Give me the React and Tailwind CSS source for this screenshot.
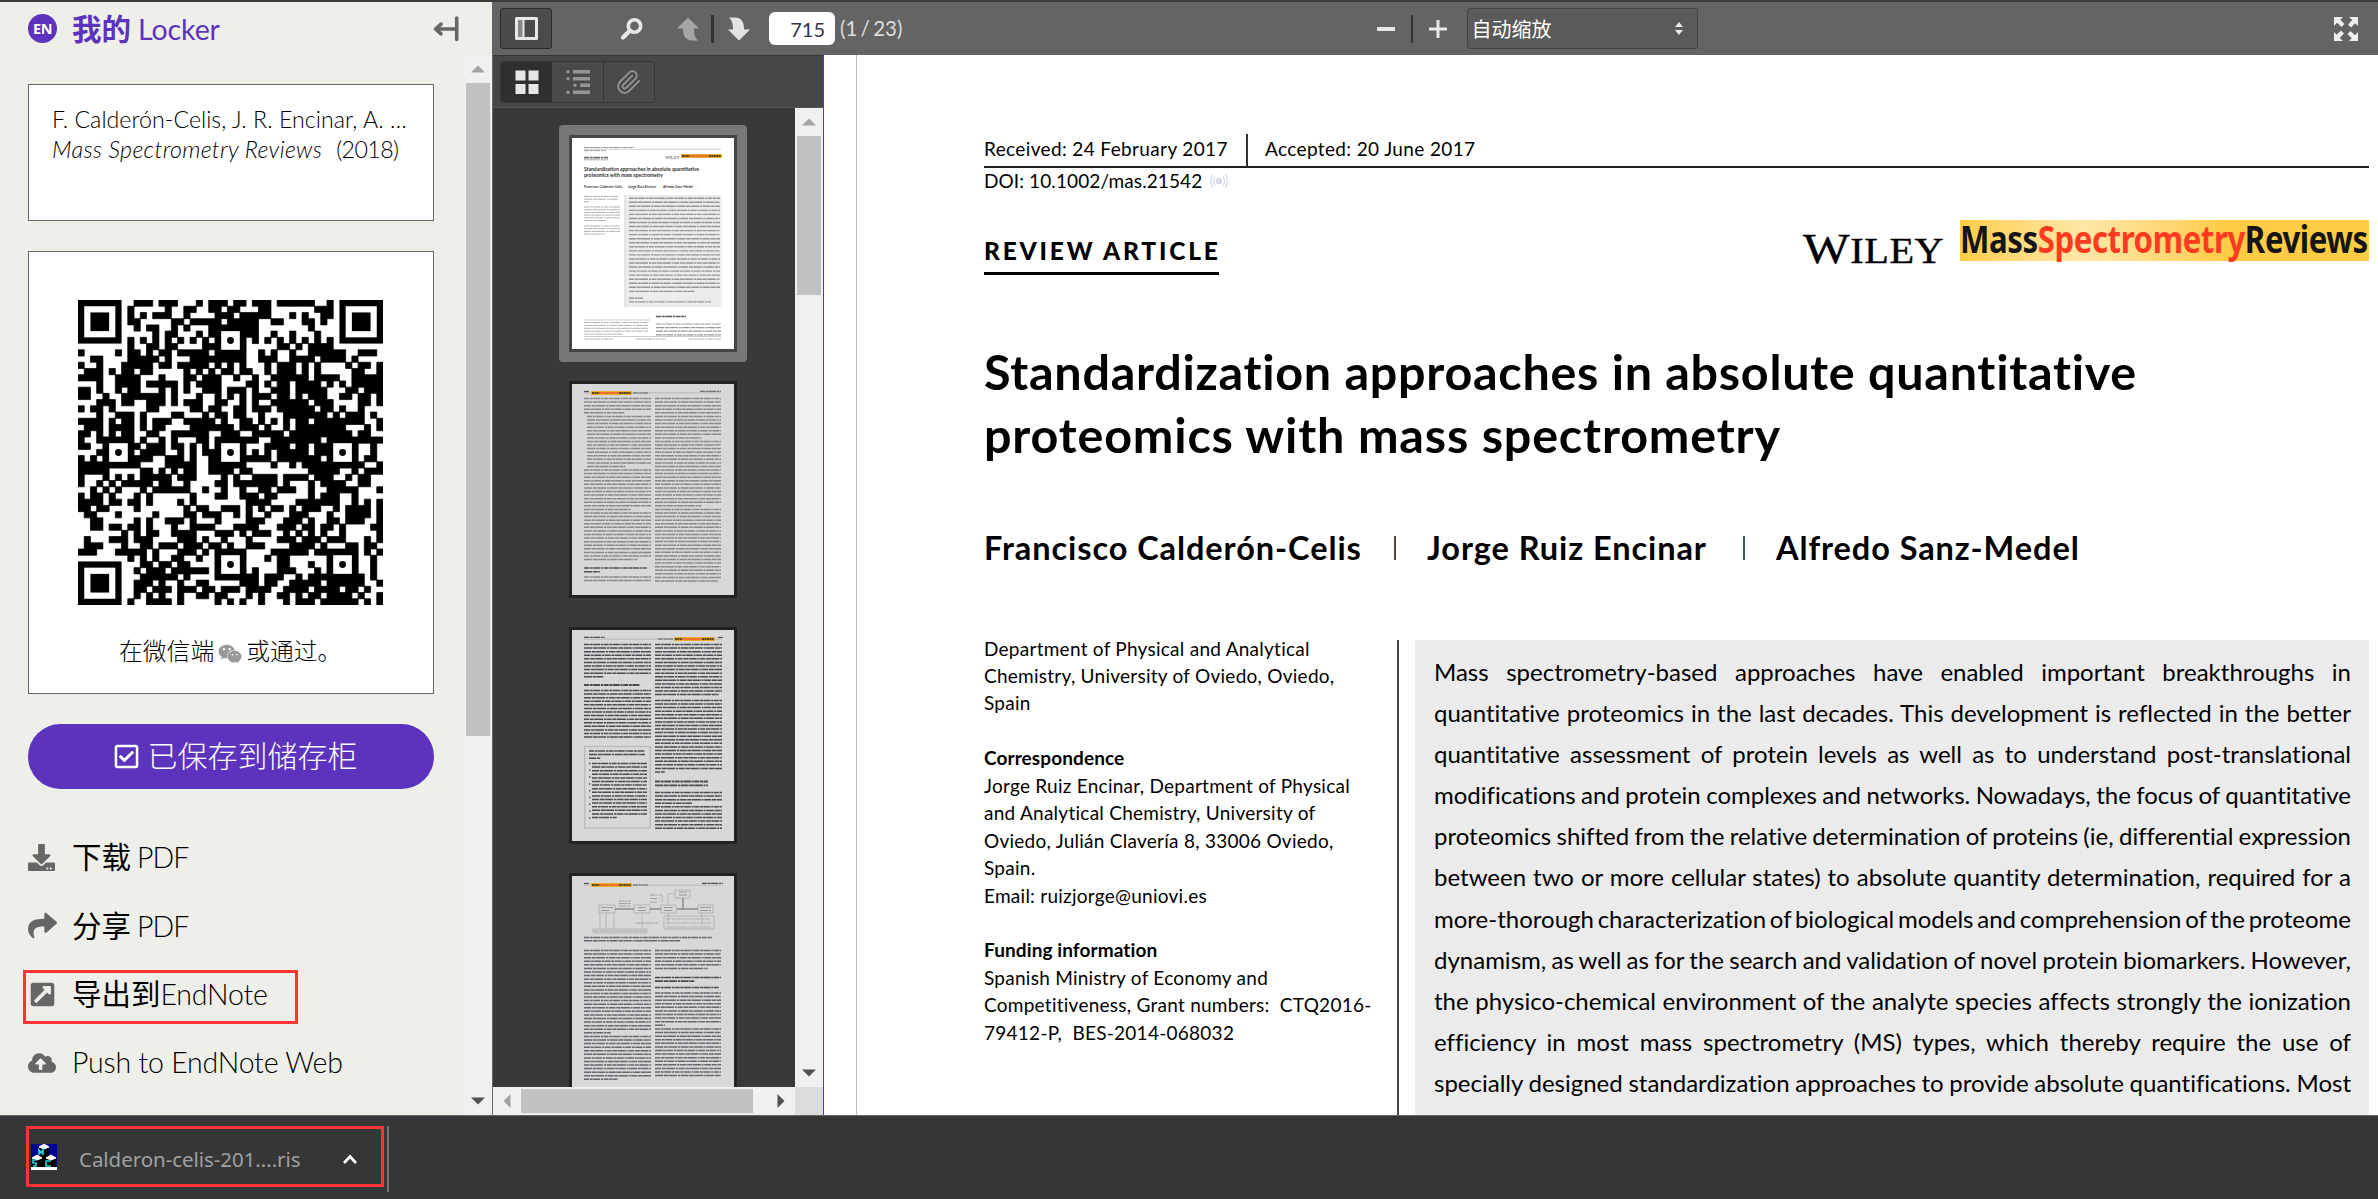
import React from "react";
import {
  FaRegCheckSquare,
  FaDownload,
  FaShare,
  FaExternalLinkSquareAlt,
  FaCloudUploadAlt,
  FaWeixin,
} from "react-icons/fa";

/* ---------- QR code: dark runs for every row of the 49x49 grid ---------- */
const QR_ROWS = [
  "9-11 13-15 19 21-23 25-26 28-30 32-37 40",
  "8 14 17-18 21-22 24-25 29-30 38-40",
  "8 10 12-14 17 22-24 26-30 34 36 39-40",
  "8-9 15-16 18-22 24-28 31-32 36-37 39",
  "9 11-12 15 17 21-28 37",
  "12 14-15 19 21-22 26-28 31 34 38",
  "8 10 12 14 16 18 20 22 26 28 30 32 34 36 38 40",
  "8 11-12 14-15 20-22 26 32-33 35 37-40",
  "0 6 8-9 11 13-14 16-20 22-26 29 31 34 37-42 45-47",
  "2-3 8-12 14 18-26 29-31 34-37 39-42 44",
  "0 3 7-11 13-14 16-20 22 24 26 30 32-34 36 38 43 45-46 48",
  "1-3 5 7-8 10-11 17 19 21 23-24 26-27 30 32-34 36 38 44-45 48",
  "0-3 6-9 13 17-18 20-22 25 28 31-36 38-41 44-48",
  "3 6-9 11-15 17 19-22 27-28 30 32-33 35-38 40 42 44-48",
  "0-1 3 6 8-9 13 15 17 20-22 24-26 28 31-33 35-39 43-44 46-48",
  "0-1 4 7-13 15 19 22 24 26 28-30 32-33 35 37-39 42-43 45-46 48",
  "3-4 5 7-8 11-13 15 17-19 22-23 26 28 31-36 38-40 45-46 48",
  "0 2-3 5 11-12 18-19 21-22 25-26 28-30 32-37 39-40 42 45",
  "3 6-8 10 15-16 20 22-23 25-26 29 33-39 41 43-45 47",
  "0-3 5 7-8 10 12-14 17-21 23 26-27 29 31 33 35-36 38-45 48",
  "1-3 5-8 10 12-13 18-24 26-28 30 33 35-42 46 48",
  "0-1 3 5 7-8 11-12 15-20 23-25 28-32 34-43 45-46",
  "0 3-8 10 13 15 19-20 22-28 31-38 40-48",
  "0-1 4 8-9 11-13 15-16 18 20 22 26 30-33 35-36 38-40 44 47",
  "3-4 8 10-13 16 18 20-22 26 28 30 32-36 38-40 44 47",
  "0 2 4-5 8-11 14-16 18 21-22 26-30 32-38 40 44 46-47",
  "0-9 14-18 21-26 31 34 36-40 41-45 48",
  "0-4 10-11 13 15 17-18 21-24 26-27 37-41 44 46-48",
  "0 4 6 8 10-14 16-18 23 25 28-31 33-36 38-40 43 45-46",
  "0 3 5 7-11 13-14 17 22-23 25-26 27-31 33 37 39-42 45-46",
  "2 4 6 10 12-17 20 23 26 29-30 32-34 37 40-44 48",
  "0 2-3 5 9 11 18 22-23 26-28 30-31 37 39-41 44",
  "0-3 5-6 8-9 11 16 18 27-30 35-41 44 46 48",
  "0-1 3-4 9 17 19-20 23-25 27 29 31-32 34 36-38 41 43-46 48",
  "1-2 6 12 17-18 20-22 25 27 30 34-36 40 43-46 48",
  "2-3 9 11 14-16 18 22 27-29 33-35 37 40-41 43-45 48",
  "2-3 5-6 8-9 11 15 18-21 25-28 32-34 36-37 39-40 42 47-48",
  "7 9 11-12 15-18 22-24 26 28-30 33 35 37 39 42 48",
  "1 5-7 9-11 16-18 20 23 27 32-34 36-38 40-42 46 48",
  "1-3 7 10-11 13-15 17-19 21-22 24 27-29 34-37 39 43-44 46-47",
  "0-2 6-10 12 16-18 20 22-26 31-36 38-44 46 48",
  "8 10 12 15-16 19 22 26 30 32-33 40 44 47",
  "10-11 13-14 16-17 22 26 32-33 37 40 44 47",
  "9 11-13 15-17 18-20 22 26 28 32-34 38 40 44 47",
  "10-15 17 22-28 30-32 35 37-39 41-45 47",
  "9-11 13 16 19-20 26-28 30-31 34-38 40-45 48",
  "9-10 12-14 16-18 20-21 23-25 27-30 33-36 38-41 43-44 46",
  "9 11 13 16 19-20 22-23 27 29 32-33 35 37-38 40-43 45 48",
  "8 11-14 16 22 24 26 29 33 35-37 39-44 46 48",
];
const qrPath = QR_ROWS.map((row, y) =>
  row
    .split(" ")
    .map((run) => {
      const [a, b = a] = run.split("-").map(Number);
      return `M${a} ${y}h${b - a + 1}v1h${a - b - 1}z`;
    })
    .join("")
).join("");

function QrCode() {
  return (
    <svg viewBox="0 0 49 49" className="mr-[2px] size-[305px]">
      <path d={qrPath} stroke="#000" strokeWidth="0.12" strokeLinejoin="round" />
      {[[0, 0], [42, 0], [0, 42]].map(([x, y]) => (
        <g key={`${x}-${y}`}>
          <rect x={x + 0.5} y={y + 0.5} width="6" height="6" fill="#fff" stroke="#000" />
          <rect x={x + 2} y={y + 2} width="3" height="3" />
        </g>
      ))}
      {[[6, 24], [24, 6], [24, 24], [24, 42], [42, 24], [42, 42]].map(([x, y]) => (
        <g key={`${x}-${y}`}>
          <rect x={x - 1.5} y={y - 1.5} width="4" height="4" fill="#fff" stroke="#000" />
          <circle cx={x + 0.5} cy={y + 0.5} r="0.55" />
        </g>
      ))}
    </svg>
  );
}

/* ---------- Thumbnails ---------- */
function Lines({ x, y, w, n, pitch = 3.58, color = "#3a3a3a", sw = 1.5, last = 0.6 }) {
  return Array.from({ length: n }, (_, i) => (
    <line
      key={i}
      x1={x}
      x2={x + (i === n - 1 ? w * last : w)}
      y1={y + i * pitch}
      y2={y + i * pitch}
      stroke={color}
      strokeWidth={sw}
      opacity="0.85"
      strokeDasharray={`${5 + ((i * 7) % 4)} .7 ${3 + ((i * 5) % 3)} .5 ${7 + (i % 3)} .8 2 .6`}
    />
  ));
}

function MiniLogo({ x, y }) {
  return (
    <g>
      <rect x={x} y={y} width="41" height="4" fill="#e9ab2c" />
      <path d={`M${x + 1} ${y + 2}h7M${x + 28} ${y + 2}h12`} stroke="#5b4516" strokeWidth="1.8" strokeDasharray="2 .4" />
      <path d={`M${x + 8} ${y + 2}h20`} stroke="#ea6a2b" strokeWidth="1.8" strokeDasharray="2 .4" />
    </g>
  );
}

function PageOne() {
  return (
    <>
      <Lines x={12} y={9.5} w={50} n={1} sw={1} last={1} color="#888" />
      <path d="M12 11.2h137" stroke="#aaa" strokeWidth=".6" />
      <Lines x={12} y={12.6} w={22} n={1} sw={1} last={1} color="#888" />
      <Lines x={12} y={19.6} w={24} n={1} sw={1.8} last={1} color="#555" />
      <path d="M12 21.8h24" stroke="#777" strokeWidth=".6" />
      <text x="93" y="21" fontSize="4.6" fontFamily="Liberation Serif" fill="#444">WILEY</text>
      <MiniLogo x={109} y={16} />
      <text x="12" y="33.2" fontSize="5.1" fontWeight="700" fontFamily="Lato" fill="#333" textLength="115">Standardization approaches in absolute quantitative</text>
      <text x="12" y="39.3" fontSize="5.1" fontWeight="700" fontFamily="Lato" fill="#333" textLength="79">proteomics with mass spectrometry</text>
      <text x="12" y="49.6" fontSize="3.4" fontWeight="700" fontFamily="Lato" fill="#333" textLength="38">Francisco Calderón-Celis</text>
      <text x="56" y="49.6" fontSize="3.4" fontWeight="700" fontFamily="Lato" fill="#333" textLength="28">Jorge Ruiz Encinar</text>
      <text x="91" y="49.6" fontSize="3.4" fontWeight="700" fontFamily="Lato" fill="#333" textLength="30">Alfredo Sanz-Medel</text>
      <rect x="53.5" y="57" width="96" height="112" fill="#ebebeb" />
      <path d="M53 57v112" stroke="#bbb" strokeWidth=".7" />
      <Lines x={57} y={60.2} w={91} n={24} pitch={4.05} sw={1.4} last={0.72} color="#888888" />
      <Lines x={57} y={160.2} w={14} n={1} sw={1.3} last={1} color="#777" />
      <Lines x={57} y={163.8} w={82} n={1} sw={1.2} last={1} color="#888" />
      <Lines x={12} y={58.5} w={34} n={3} pitch={2.7} sw={0.9} last={0.15} color="#999" />
      <Lines x={12} y={69} w={36} n={6} pitch={2.7} sw={0.9} color="#999" />
      <Lines x={12} y={88} w={36} n={4} pitch={2.7} sw={0.9} color="#999" />
      <path d="M12 182h66M12 198.5h137" stroke="#999" strokeWidth=".5" />
      <Lines x={12} y={184.5} w={64} n={5} pitch={2.9} sw={0.9} color="#999" />
      <Lines x={84} y={178.5} w={30} n={1} sw={1.5} last={1} color="#444" />
      <Lines x={84} y={186} w={65} n={4} pitch={3.6} sw={1.2} last={1} color="#888" />
      <Lines x={12} y={201} w={29} n={1} sw={0.9} last={1} color="#999" />
      <Lines x={64} y={201} w={30} n={1} sw={0.9} last={1} color="#999" />
      <Lines x={116} y={201} w={33} n={1} sw={0.9} last={1} color="#999" />
    </>
  );
}

function PageTwo() {
  const c = "#7c7c7c";
  return (
    <>
      <path d="M12 8.8h137" stroke="#999" strokeWidth=".5" />
      <MiniLogo x={19} y={7} />
      <Lines x={12} y={7.5} w={5} n={1} sw={1.2} last={1} />
      <Lines x={61} y={9} w={15} n={1} sw={1.5} last={1} color="#777" />
      <Lines x={128} y={7.3} w={21} n={1} sw={1.1} last={1} />
      <Lines x={12} y={14.5} w={67} n={5} color={c} />
      <Lines x={15} y={32.4} w={64} n={15} color={c} />
      <Lines x={12} y={86} w={67} n={12} color={c} last={0.7} />
      <Lines x={12} y={129} w={67} n={14} color={c} last={0.8} />
      <Lines x={12} y={184} w={63} n={2} pitch={3.8} sw={1.6} last={0.25} />
      <Lines x={12} y={193} w={67} n={2} color={c} last={1} />
      <Lines x={83} y={14.5} w={66} n={12} color={c} last={0.7} />
      <Lines x={83} y={57.4} w={66} n={19} color={c} last={0.7} />
      <Lines x={83} y={125.4} w={66} n={21} color={c} last={0.95} />
    </>
  );
}

function PageThree() {
  const c = "#34343c";
  return (
    <>
      <path d="M12 9.2h137" stroke="#999" strokeWidth=".5" />
      <Lines x={12} y={7.3} w={21} n={1} sw={1.2} last={1} />
      <Lines x={86} y={9} w={15} n={1} sw={1.5} last={1} color="#777" />
      <MiniLogo x={102} y={7} />
      <Lines x={146} y={7.5} w={5} n={1} sw={1.2} last={1} />
      <Lines x={12} y={14.5} w={67} n={10} color={c} last={0.3} />
      <Lines x={12} y={55} w={56} n={1} color={c} sw={1.8} last={1} />
      <Lines x={12} y={60.5} w={67} n={14} color={c} last={1} />
      <rect x="12.7" y="116.5" width="65.5" height="81.5" fill="none" stroke="#b4b8b9" strokeWidth="1.2" />
      <Lines x={17} y={121} w={56} n={3} color={c} last={0.2} />
      <Lines x={20} y={133.5} w={55} n={16} color={c} pitch={3.6} last={0.45} />
      <Lines x={17} y={133.5} w={1.4} n={9} color={c} pitch={6.8} last={1} />
      <Lines x={83} y={14.5} w={67} n={15} color={c} last={0.95} />
      <Lines x={83} y={70.4} w={67} n={21} color={c} last={0.15} />
      <Lines x={83} y={151.5} w={53} n={2} color={c} pitch={3.8} sw={1.8} last={1} />
      <Lines x={83} y={162.5} w={67} n={4} color={c} last={0.55} />
      <Lines x={83} y={176.8} w={67} n={7} color={c} last={1} />
    </>
  );
}

function PageFour() {
  const c = "#55555c";
  return (
    <>
      <path d="M12 9.2h137" stroke="#999" strokeWidth=".5" />
      <MiniLogo x={19} y={7} />
      <Lines x={12} y={7.5} w={5} n={1} sw={1.2} last={1} />
      <Lines x={61} y={9} w={15} n={1} sw={1.5} last={1} color="#777" />
      <Lines x={130} y={7.3} w={21} n={1} sw={1.2} last={1} />
      <g fill="none" stroke="#a0a0a0" strokeWidth=".6">
        <path d="M27 29h16v8H27zM62 29h16v8H62zM89 29h15v8H89zM126 29h15v8h-15zM103 14h15v8h-15z" />
        <path d="M28 37v16M34 37v16M42 37v16M70 37v16M96 37v12M96 29V18h7M86 19h4v7M130 37v12" />
        <path d="M92 40h50v13H92z" />
        <path d="M21 53h54v4H21z" />
      </g>
      <path d="M43 33h19M78 33h11M105 33h21M111 22v11" stroke="#666" strokeWidth="1" />
      <g>
        <Lines x={29} y={31.5} w={12} n={2} color="#888" sw={1} last={0.7} pitch={3} />
        <Lines x={66} y={31.5} w={8} n={2} color="#888" sw={1} last={1} pitch={3} />
        <Lines x={92} y={31.5} w={9} n={2} color="#888" sw={1} last={1} pitch={3} />
        <Lines x={128} y={31.5} w={11} n={2} color="#888" sw={1} last={1} pitch={3} />
        <Lines x={107} y={16} w={8} n={2} color="#888" sw={1} last={1} pitch={3} />
        <Lines x={78} y={19} w={7} n={3} color="#999" sw={1} last={1} />
        <Lines x={47} y={25} w={12} n={3} color="#999" sw={1} last={1} pitch={2.5} />
        <Lines x={22} y={55} w={52} n={1} color="#999" sw={1} last={1} />
        <Lines x={64} y={47} w={22} n={1} color="#999" sw={1} last={1} />
        <Lines x={94} y={43} w={45} n={3} color="#aaa" sw={1} last={1} pitch={4} />
      </g>
      <Lines x={12} y={61.5} w={128} n={2} color={c} sw={1.4} last={0.75} pitch={3.2} />
      <Lines x={12} y={74.5} w={67} n={14} color={c} last={1} />
      <Lines x={12} y={124.6} w={67} n={10} color={c} last={0.4} />
      <Lines x={12} y={160.4} w={67} n={13} color={c} last={0.5} />
      <Lines x={83} y={74.5} w={66} n={6} color={c} last={0.8} />
      <Lines x={83} y={101.5} w={66} n={2} color="#333" sw={1.7} last={0.6} />
      <Lines x={83} y={111.5} w={64} n={1} color="#333" sw={1.7} last={1} />
      <Lines x={83} y={117} w={66} n={10} color={c} last={0.15} />
      <Lines x={83} y={153} w={66} n={14} color={c} last={1} />
    </>
  );
}

function Thumb({ children, selected }) {
  return (
    <div
      className={
        selected
          ? "mx-auto h-[237px] w-[188px] shrink-0 rounded bg-[#787878] p-[10px]"
          : "mx-auto h-[237px] w-[188px] shrink-0 p-[10px]"
      }
    >
      <div className={selected ? "border-[3px] border-[#454545] bg-white" : "border-[3px] border-[#222222] bg-[#d8d8d8]"}>
        <svg viewBox="0 0 162 211" className="block h-[211px] w-[162px]">{children}</svg>
      </div>
    </div>
  );
}

/* ---------- Scroll bars ---------- */
const Tri = ({ d, fill }) => (
  <svg viewBox="0 0 14 14" className="size-3.5" fill={fill}><path d={d} /></svg>
);
const UP = "M0 10.5L7 3.5l7 7z";
const DOWN = "M0 3.5h14l-7 7z";
const LEFT = "M10.5 0v14l-7-7z";
const RIGHT = "M3.5 0v14l7-7z";

/* ---------- Left panel ---------- */
function ActionRow({ icon, children }) {
  return (
    <div className="flex h-[68.5px] items-center">
      <span className="flex w-[44px] text-[#666666]">{icon}</span>
      <span className="text-[28.5px] tracking-[-0.2px] whitespace-nowrap">{children}</span>
    </div>
  );
}
const Cjk = ({ children }) => <span className="text-[29.5px] font-normal tracking-normal">{children}</span>;
const Pdf = () => <span className="ml-[6px] tracking-[-1px]">PDF</span>;

function LockerPanel() {
  return (
    <aside className="relative flex w-[493px] shrink-0 flex-col border-r border-[#666666] bg-[#efefea] font-light text-black">
      <header className="flex h-[53px] items-center pl-7 text-[#5c33bd]">
        <span className="flex size-[29px] items-center justify-center rounded-full bg-[#5c33bd] font-['Open_Sans'] text-[14.5px] font-bold tracking-[-0.5px] text-white">EN</span>
        <h1 className="ml-[15px] flex items-baseline gap-[7px] leading-[40px] whitespace-nowrap">
          <span className="text-[29.5px] font-bold">我的</span>
          <span className="text-[28.5px] font-normal tracking-[-0.1px]">Locker</span>
        </h1>
        <svg viewBox="0 0 26 26" className="mr-[33px] ml-auto size-[26px]" fill="none" stroke="#666" strokeWidth="3.6" strokeLinecap="round" strokeLinejoin="round">
          <path d="M23.7 2v21.5M4 13h19M8 8.2L2.5 13 8 17.8" />
        </svg>
      </header>
      <div className="flex min-h-0 flex-1">
        <div className="w-[434px] pt-[29px] pl-7">
          <section className="h-[137px] border border-[#666666] bg-white pt-[19px] pl-[23px] text-[23.2px] leading-[30px] whitespace-nowrap">
            <p className="tracking-[0.03px]">F. Calderón-Celis, J. R. Encinar, A. …</p>
            <p><i className="tracking-[0.34px]">Mass Spectrometry Reviews</i><span className="pl-[14px] tracking-[-0.6px]">(2018)</span></p>
          </section>
          <section className="mt-[30px] flex h-[443px] flex-col items-center border border-[#666666] bg-white pt-12">
            <QrCode />
            <p className="mt-[28px] ml-[90px] flex items-center gap-1 self-start text-[23.8px] leading-[36px] whitespace-nowrap">
              在微信端 <FaWeixin className="mt-1.5 size-6 text-[#999999]" /> <span>或通过。</span>
            </p>
          </section>
          <button className="mt-[30px] flex h-[65px] w-full items-center justify-center gap-2 rounded-full bg-[#5c33bd] pb-0.5 pl-2 text-[30px] text-white">
            <FaRegCheckSquare className="mt-0.5 size-[27px]" />
            <span>已保存到储存柜</span>
          </button>
          <nav className="mt-[34px]">
            <ActionRow icon={<FaDownload className="size-[27px]" />}><Cjk>下载</Cjk><Pdf /></ActionRow>
            <ActionRow icon={<FaShare className="size-[29px]" />}><Cjk>分享</Cjk><Pdf /></ActionRow>
            <ActionRow icon={<FaExternalLinkSquareAlt className="ml-px size-[27px]" />}><Cjk>导出到</Cjk>EndNote</ActionRow>
            <ActionRow icon={<FaCloudUploadAlt className="size-[28px]" />}>Push to EndNote Web</ActionRow>
          </nav>
        </div>
        <div className="ml-[29px] flex w-[29px] flex-col items-center bg-[#f0f0f0]">
          <div className="flex h-7 items-center"><Tri d={UP} fill="#a3a3a3" /></div>
          <div className="h-[653px] w-6 bg-[#c1c1c1]" />
          <div className="mt-auto flex h-7 items-center"><Tri d={DOWN} fill="#505050" /></div>
        </div>
      </div>
      <div className="absolute top-[968px] left-[23px] h-[54px] w-[275px] border-[3px] border-[#ff3333]" />
    </aside>
  );
}

/* ---------- PDF viewer ---------- */
function Toolbar() {
  return (
    <div className="flex h-[53px] shrink-0 items-center bg-[#646464] pl-[7px] text-[20px] text-[#dddddd]">
      <div className="flex h-[41px] w-[52px] items-center justify-center rounded-[3px] border border-[#2b2b2b] bg-[#4b4b4b]">
        <svg viewBox="0 0 23 23" className="size-[23px]"><rect width="23" height="23" rx="1.5" fill="#e8e8e8" /><path d="M3 3h4.5v17H3z" fill="#888" /><path d="M9.5 3H20v17H9.5z" fill="#4b4b4b" /></svg>
      </div>
      <svg viewBox="0 0 22 22" className="ml-[69px] size-[22px]" fill="none" stroke="#e6e6e6"><circle cx="13.5" cy="8" r="6.2" strokeWidth="3.6" /><path d="M8.5 13L2 19.5" strokeWidth="4.4" strokeLinecap="round" /></svg>
      <svg viewBox="0 0 24 24" className="ml-[33px] size-6" fill="#a6a6a6"><path d="M12 0.5L23 11.5h-5c0 6 1 9 4 12h-6c-6 0-9-4-9-12H1z" /></svg>
      <div className="ml-[11px] h-7 w-[3px] bg-[#333333]" />
      <svg viewBox="0 0 24 24" className="ml-[13px] size-6" fill="#e3e3e3"><path d="M12 23.5L1 12.5h5c0-6-1-9-4-12h6c6 0 9 4 9 12h6z" /></svg>
      <div className="ml-[18px] flex h-[33px] w-[66px] items-center justify-end rounded-md bg-white pr-2.5 text-[20px] text-[#333344]">715</div>
      <span className="ml-[5px] text-[20.5px] [word-spacing:-2px]">(1 / 23)</span>
      <div className="ml-[475px] flex items-center">
        <div className="h-1 w-[18px] bg-[#e8e8e8]" />
        <div className="ml-4 h-7 w-0.5 bg-[#333333]" />
        <svg viewBox="0 0 18 18" className="ml-4 size-[18px]" stroke="#e8e8e8" strokeWidth="3"><path d="M9 0v18M0 9h18" /></svg>
      </div>
      <div className="ml-5 flex h-[41px] w-[231px] items-center rounded-[3px] border border-[#444444] bg-[#5a5a5a] pr-3.5 pl-[3px] text-white">
        自动缩放
        <svg viewBox="0 0 8 13" className="ml-auto h-[13px] w-2" fill="#e8e8e8"><path d="M0 5l4-5 4 5zM0 8h8l-4 5z" /></svg>
      </div>
      <svg viewBox="0 0 24 24" className="mr-5 ml-auto size-6" fill="#eeeeee">
        {[0, 90, 180, 270].map((a) => (
          <path key={a} transform={`rotate(${a} 12 12)`} d="M0 0h9L6.3 2.7 10.5 7 7.5 10 3 5.7 0 9z" />
        ))}
      </svg>
    </div>
  );
}

function ThumbnailSidebar() {
  return (
    <div className="flex w-[330px] shrink-0 flex-col">
      <div className="flex h-[53px] shrink-0 items-center border-t border-b border-t-[#333333] border-b-[#555555] bg-[#464646] pl-[7px]">
        <div className="flex h-[42px] w-[155px] overflow-hidden rounded-[3px] border border-[#363636] bg-[#4a4a4a]">
          <div className="flex w-[51px] items-center justify-center bg-[#2f2f2f]">
            <svg viewBox="0 0 24 24" className="size-6" fill="#e6e6e6"><path d="M.5.5h10v10H.5zM13.5.5h10v10h-10zM.5 14h10v10H.5zM13.5 14h10v10h-10z" /></svg>
          </div>
          <div className="flex w-[52px] items-center justify-center border-r border-[#363636]">
            <svg viewBox="0 0 24 24" className="size-6" fill="#959595"><path d="M7 0h17v3.5H7zM7 7h17v3.5H7zM14 13.5h10V17H14zM7 20.5h17V24H7z" /><circle cx="2" cy="1.8" r="1.7" /><circle cx="2" cy="8.8" r="1.7" /><circle cx="9" cy="15.3" r="1.7" /><circle cx="2" cy="22.2" r="1.7" /></svg>
          </div>
          <div className="flex flex-1 items-center justify-center">
            <svg viewBox="0 0 24 24" className="size-[26px]" fill="none" stroke="#959595" strokeWidth="1.7" strokeLinecap="round"><path d="m21.4 11.05-9.19 9.19a6 6 0 0 1-8.49-8.49l8.57-8.57A4 4 0 1 1 18 8.84l-8.59 8.57a2 2 0 0 1-2.83-2.83l8.49-8.48" /></svg>
          </div>
        </div>
      </div>
      <div className="flex min-h-0 flex-1">
        <div className="flex w-[302px] flex-col gap-[9px] overflow-hidden bg-[#393939] pt-[17px] pl-[18px]">
          <Thumb selected><PageOne /></Thumb>
          <Thumb><PageTwo /></Thumb>
          <Thumb><PageThree /></Thumb>
          <Thumb><PageFour /></Thumb>
        </div>
        <div className="flex w-7 flex-col items-center bg-[#f0f0f0]">
          <div className="flex h-7 items-center"><Tri d={UP} fill="#a3a3a3" /></div>
          <div className="h-[159px] w-6 bg-[#c1c1c1]" />
          <div className="mt-auto flex h-7 items-center"><Tri d={DOWN} fill="#505050" /></div>
        </div>
      </div>
      <div className="flex h-7 shrink-0 items-center bg-[#f0f0f0]">
        <div className="flex w-7 justify-center"><Tri d={LEFT} fill="#a3a3a3" /></div>
        <div className="h-6 w-[232px] bg-[#c1c1c1]" />
        <div className="ml-auto flex w-7 justify-center"><Tri d={RIGHT} fill="#505050" /></div>
        <div className="h-7 w-7 bg-[#dcdcdc]" />
      </div>
    </div>
  );
}

const ABSTRACT = [
  "Mass spectrometry-based approaches have enabled important breakthroughs in",
  "quantitative proteomics in the last decades. This development is reflected in the better",
  "quantitative assessment of protein levels as well as to understand post-translational",
  "modifications and protein complexes and networks. Nowadays, the focus of quantitative",
  "proteomics shifted from the relative determination of proteins (ie, differential expression",
  "between two or more cellular states) to absolute quantity determination, required for a",
  "more-thorough characterization of biological models and comprehension of the proteome",
  "dynamism, as well as for the search and validation of novel protein biomarkers. However,",
  "the physico-chemical environment of the analyte species affects strongly the ionization",
  "efficiency in most mass spectrometry (MS) types, which thereby require the use of",
  "specially designed standardization approaches to provide absolute quantifications. Most",
];

function Article() {
  return (
    <main className="min-w-0 flex-1 overflow-hidden border-l border-[#5c33bd] bg-white pl-8 text-black [font-variant-ligatures:none]">
      <div className="h-full border-l border-[#bbbbbb] pt-[79px] pr-[9px] pl-[127px]">
        <div className="flex h-8 text-[19px] leading-[29px] tracking-[0.37px] whitespace-nowrap">
          <span className="w-[262px]">Received: 24 February 2017</span>
          <span className="border-l-2 border-[#333333] pl-[17px]">Accepted: 20 June 2017</span>
        </div>
        <div className="flex items-center gap-2 border-t-2 border-[#222222] text-[19px] leading-[25px] tracking-[0.1px]">
          DOI: 10.1002/mas.21542
          <svg viewBox="0 0 18 18" className="size-[18px]" fill="none" stroke="#d3dbe8" strokeWidth="1.3"><circle cx="9" cy="9" r="2.6" fill="#d3dbe8" /><path d="M5 4.500c-2 3-2 6 0 9M13 4.500c2 3 2 6 0 9M2.500 2c-2.500 5-2.500 9 0 14M15.500 2c2.500 5 2.500 9 0 14" /></svg>
        </div>
        <div className="mt-[25px] flex h-[57px] items-start">
          <div className="mt-[18px] border-b-[3px] border-black pb-1.5 text-[24.5px] leading-[30px] font-black tracking-[2.8px] whitespace-nowrap"><span className="-mr-[2px]">REVIEW ARTICLE</span></div>
          <div className="mr-[16px] ml-auto w-[141px]">
            <div className="mt-[8px] w-max origin-left scale-x-[1.15] font-['Liberation_Serif'] text-[35px] leading-[46px] tracking-[0.5px] [-webkit-text-stroke:0.4px_black]"><span className="text-[43px]">W</span>ILEY</div>
          </div>
          <div className="mt-[2px] h-[41px] w-[409px] bg-linear-to-r from-[#ffcc44] via-[#ffe7a8] via-30% to-[#ffcc44] to-65%">
            <div className="w-max origin-left scale-x-[0.82] font-['Noto_Sans'] text-[38px] leading-[36px] font-bold tracking-[-0.5px] text-[#151515]">Mass<span className="text-[#ff3b1f]">Spectrometry</span>Reviews</div>
          </div>
        </div>
        <h1 className="mt-[65px] text-[48.5px] leading-[63px] font-bold tracking-[0.72px] whitespace-nowrap">Standardization approaches in absolute quantitative<br /><span className="tracking-[0.82px]">proteomics with mass spectrometry</span></h1>
        <div className="mt-[62px] flex items-center text-[32.5px] leading-[40px] font-bold tracking-[0.92px] whitespace-nowrap">
          <span className="w-[410px]">Francisco Calderón-Celis</span>
          <i className="h-6 w-0.5 bg-[#554433]" />
          <span className="ml-[31px] w-[316px]">Jorge Ruiz Encinar</span>
          <i className="h-6 w-0.5 bg-[#445566]" />
          <span className="ml-[31px]">Alfredo Sanz-Medel</span>
        </div>
        <div className="mt-[72px] flex h-[475px]">
          <div className="-mt-[5.5px] w-[413px] text-[19px] leading-[27.46px] tracking-[0.26px] whitespace-nowrap">
            <p>Department of Physical and Analytical<br />Chemistry, University of Oviedo, Oviedo,<br />Spain</p>
            <p className="mt-[27.46px]"><b className="tracking-[0.1px]">Correspondence</b><br />Jorge Ruiz Encinar, Department of Physical<br />and Analytical Chemistry, University of<br />Oviedo, Julián Clavería 8, 33006 Oviedo,<br />Spain.<br />Email: ruizjorge@uniovi.es</p>
            <p className="mt-[27.46px]"><b className="tracking-[0.1px]">Funding information</b><br />Spanish Ministry of Economy and<br />Competitiveness, Grant numbers: &nbsp;CTQ2016-<br />79412-P, &nbsp;BES-2014-068032</p>
          </div>
          <div className="w-0.5 bg-[#444444]" />
          <div className="ml-4 flex-1 bg-[#ebebeb] pt-[11px] pr-[18px] pl-[19px] text-[24px] leading-[41.1px]">
            {ABSTRACT.map((line) => (
              <p key={line} className="text-justify [word-spacing:-4px] whitespace-nowrap [text-align-last:justify]">{line}</p>
            ))}
          </div>
        </div>
      </div>
    </main>
  );
}

function DownloadBar() {
  return (
    <footer className="flex h-[84px] shrink-0 items-start border-t border-[#666666] bg-[#363636] pt-2.5 pl-[26px]">
      <div className="flex h-[61px] w-[358px] items-center border-[3px] border-[#ff3333] pl-0.5">
        <svg viewBox="0 0 26 26" className="size-[26px]">
          <rect width="26" height="26" fill="#000090" />
          <path d="M0 23h26v3H0z" fill="#fff" />
          <path d="M8 3h10v11h7v9H1v-9h7z" fill="#000" />
          <path d="M8 3l5-3 5 3-5 2zM1 14l5-3 5 3-5 2zM15 14l5-3 5 3-5 2z" fill="#fff" stroke="#fff" />
          <path d="M8 11V6l2 3 2-3v5M5 16H2v3h3v3H2M20 17h-5v5h5" fill="none" stroke="#20d8e0" strokeWidth="1.6" />
        </svg>
        <span className="mt-[5px] ml-[22px] font-['Noto_Sans'] text-[20.5px] tracking-[-0.05px] text-[#a0a0a0]">Calderon-celis-201....ris</span>
        <svg viewBox="0 0 14 10" className="mt-1 mr-6 ml-auto h-2.5 w-3.5" fill="none" stroke="#fff" strokeWidth="2.8"><path d="M1 9l6-6.5L13 9" /></svg>
      </div>
      <div className="ml-[3px] h-[66px] w-0.5 bg-[#777777]" />
    </footer>
  );
}

export default function App() {
  return (
    <div className="flex h-[1199px] w-[2378px] flex-col overflow-hidden border-t-2 border-[#3c3c3c] font-[Lato,'Noto_Sans_CJK_SC',sans-serif]">
      <div className="flex min-h-0 flex-1">
        <LockerPanel />
        <div className="flex min-w-0 flex-1 flex-col">
          <Toolbar />
          <div className="flex min-h-0 flex-1">
            <ThumbnailSidebar />
            <Article />
          </div>
        </div>
      </div>
      <DownloadBar />
    </div>
  );
}
